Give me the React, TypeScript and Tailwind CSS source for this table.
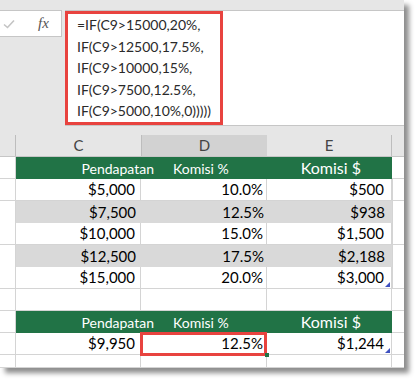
const rows = [
  { c: '$5,000', d: '10.0%', e: '$500', shade: false },
  { c: '$7,500', d: '12.5%', e: '$938', shade: true },
  { c: '$10,000', d: '15.0%', e: '$1,500', shade: false },
  { c: '$12,500', d: '17.5%', e: '$2,188', shade: true },
  { c: '$15,000', d: '20.0%', e: '$3,000', shade: false, mark: true },
];

const formula = [
  '=IF(C9>15000,20%,',
  'IF(C9>12500,17.5%,',
  'IF(C9>10000,15%,',
  'IF(C9>7500,12.5%,',
  'IF(C9>5000,10%,0)))))',
];

function Mark() {
  return (
    <span className="absolute right-[1px] bottom-[1px] w-0 h-0 border-l-[5px] border-l-transparent border-b-[5px] border-b-[#3f51c0]" />
  );
}

function GreenRow() {
  return (
    <div className="flex h-[22px] text-white">
      <div className="w-[16px] border-r border-b border-[#d4d4d4] bg-white" />
      <div className="w-[376px] bg-[#217346] flex items-center">
        <span className="w-[138px] text-right text-[14px]">Pendapatan</span>
        <span className="ml-[19px] text-[14px]">Komisi %</span>
        <span className="flex-1 text-right pr-[31px] text-[16px]">Komisi $</span>
      </div>
      <div className="flex-1 border-b border-[#d4d4d4] bg-white" />
    </div>
  );
}

function EmptyRow({ h = 'h-[22px]' }: { h?: string }) {
  return (
    <div className={`flex ${h} border-b border-[#d4d4d4]`}>
      <div className="w-[16px] border-r border-[#d4d4d4]" />
      <div className="w-[125px] border-r border-[#d4d4d4]" />
      <div className="w-[126px] border-r border-[#d4d4d4]" />
      <div className="w-[125px] border-r border-[#d4d4d4]" />
      <div className="flex-1" />
    </div>
  );
}

export default function App() {
  return (
    <div className="w-[419px] h-[383px] bg-white" style={{ fontFamily: 'Lato, "Liberation Sans", sans-serif' }}>
      <div className="w-[404px] h-[368px] bg-white flex flex-col shadow-[5px_5px_5px_rgba(0,0,0,0.45)]">
        <div className="h-[10px] bg-[#e6e6e6]" />

        {/* formula bar */}
        <div className="flex h-[116px] bg-[#e6e6e6]">
          <div className="w-[65px]">
            <div className="h-[27px] w-[62px] bg-white border border-l-0 border-[#c6c6c6] flex items-center">
              <svg width="12" height="10" viewBox="0 0 12 10" className="ml-[3px]">
                <path d="M1 5.5 L4.5 8.5 L11 1.5" fill="none" stroke="#c4c4c4" strokeWidth="1.6" />
              </svg>
              <span
                className="ml-[23px] text-[15px] italic text-[#555] leading-none"
                style={{ fontFamily: '"Liberation Serif", serif' }}
              >
                fx
              </span>
            </div>
          </div>
          <div className="flex-1 bg-white border-t border-b border-[#c6c6c6]">
            <div className="w-[158px] h-full border-[3px] border-[#e8433f] pl-[9px] text-[14px] leading-[21.5px] text-[#2a2a2a]">
              {formula.map((f) => (
                <div key={f} className="whitespace-nowrap">{f}</div>
              ))}
            </div>
          </div>
        </div>

        <div className="h-[9px] bg-[#e6e6e6]" />

        {/* column headers */}
        <div className="flex h-[22px] bg-[#e6e6e6] text-[15px] text-[#444] border-b border-[#c6c6c6]">
          <div className="w-[16px] border-r border-[#bdbdbd]" />
          <div className="w-[125px] flex items-center justify-center">C</div>
          <div className="w-[126px] bg-[#d2d2d2] flex items-center justify-center border-l border-[#bdbdbd]">D</div>
          <div className="w-[125px] flex items-center justify-center border-r border-[#bdbdbd]">E</div>
          <div className="flex-1" />
        </div>

        <GreenRow />

        {rows.map((r) => (
          <div key={r.c} className={`flex h-[22px] text-[15px] text-black ${r.shade ? '' : 'border-b border-[#d4d4d4]'}`}>
            <div className="w-[16px] border-r border-[#d4d4d4] bg-white" />
            <div className={`w-[125px] flex items-center justify-end pr-[5px] ${r.shade ? 'bg-[#d9d9d9]' : 'border-r border-[#d4d4d4]'}`}>{r.c}</div>
            <div className={`w-[126px] flex items-center justify-end pr-[3px] ${r.shade ? 'bg-[#d9d9d9]' : 'border-r border-[#d4d4d4]'}`}>{r.d}</div>
            <div className={`relative w-[125px] flex items-center justify-end pr-[7px] ${r.shade ? 'bg-[#d9d9d9]' : 'border-r border-[#d4d4d4]'}`}>
              {r.e}
              {r.mark && <Mark />}
            </div>
            <div className="flex-1 border-l border-[#d4d4d4]" />
          </div>
        ))}

        <EmptyRow />
        <GreenRow />

        <div className="flex h-[22px] text-[15px] text-black border-b border-[#d4d4d4]">
          <div className="w-[16px] border-r border-[#d4d4d4]" />
          <div className="w-[125px] flex items-center justify-end pr-[5px] border-r border-[#d4d4d4]">$9,950</div>
          <div className="relative w-[126px] flex items-center justify-end pr-[3px] border-r border-[#d4d4d4]">
            12.5%
            <span className="absolute -left-[1px] -top-[1px] -right-[1px] -bottom-[2px] border-[3px] border-[#e8433f]" />
            <span className="absolute -right-[3px] -bottom-[3px] w-[4px] h-[4px] bg-[#217346]" />
          </div>
          <div className="relative w-[125px] flex items-center justify-end pr-[7px] border-r border-[#d4d4d4]">
            $1,244
            <Mark />
          </div>
          <div className="flex-1" />
        </div>

        <EmptyRow h="h-[13px]" />
      </div>
    </div>
  );
}
